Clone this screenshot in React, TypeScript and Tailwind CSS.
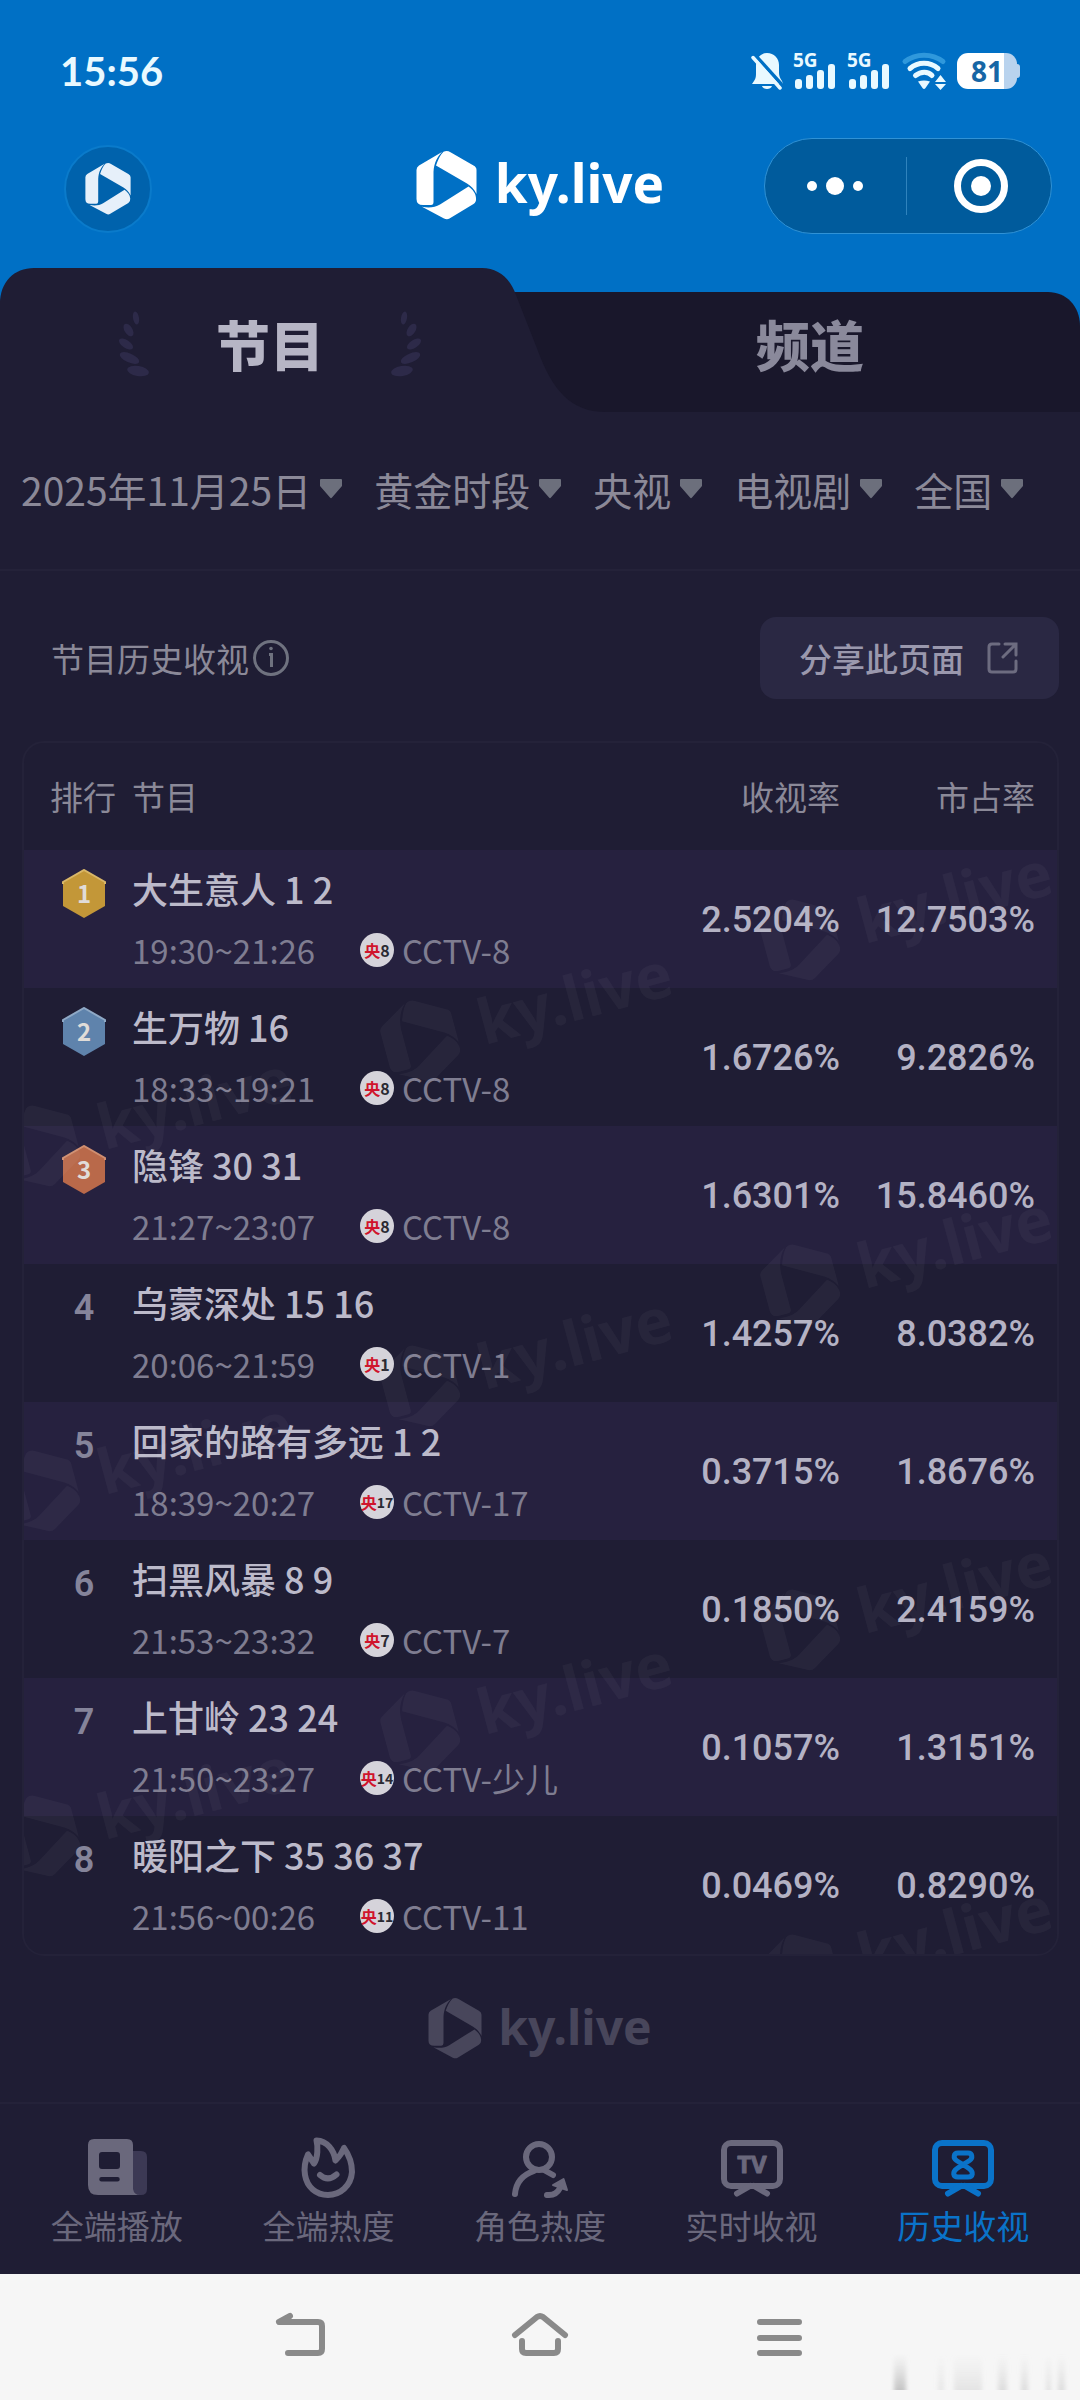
import { useState } from "react";
import type { ReactNode } from "react";
import { clsx } from "clsx";

interface Program {
  rank: number;
  title: string;
  time: string;
  mark: string;
  channel: string;
  rating: string;
  share: string;
}

const PROGRAMS: Program[] = [
  { rank: 1, title: "大生意人 1 2", time: "19:30~21:26", mark: "8", channel: "CCTV-8", rating: "2.5204%", share: "12.7503%" },
  { rank: 2, title: "生万物 16", time: "18:33~19:21", mark: "8", channel: "CCTV-8", rating: "1.6726%", share: "9.2826%" },
  { rank: 3, title: "隐锋 30 31", time: "21:27~23:07", mark: "8", channel: "CCTV-8", rating: "1.6301%", share: "15.8460%" },
  { rank: 4, title: "乌蒙深处 15 16", time: "20:06~21:59", mark: "1", channel: "CCTV-1", rating: "1.4257%", share: "8.0382%" },
  { rank: 5, title: "回家的路有多远 1 2", time: "18:39~20:27", mark: "17", channel: "CCTV-17", rating: "0.3715%", share: "1.8676%" },
  { rank: 6, title: "扫黑风暴 8 9", time: "21:53~23:32", mark: "7", channel: "CCTV-7", rating: "0.1850%", share: "2.4159%" },
  { rank: 7, title: "上甘岭 23 24", time: "21:50~23:27", mark: "14", channel: "CCTV-少儿", rating: "0.1057%", share: "1.3151%" },
  { rank: 8, title: "暖阳之下 35 36 37", time: "21:56~00:26", mark: "11", channel: "CCTV-11", rating: "0.0469%", share: "0.8290%" },
];

const FILTERS = [
  { label: "日期", value: "2025年11月25日" },
  { label: "时段", value: "黄金时段" },
  { label: "频道组", value: "央视" },
  { label: "类型", value: "电视剧" },
  { label: "地区", value: "全国" },
];

const MEDALS: Record<number, { fill: string; edge: string }> = {
  1: { fill: "#c39738", edge: "#d9b768" },
  2: { fill: "#5f83ac", edge: "#8fa9c6" },
  3: { fill: "#b9694a", edge: "#d08e70" },
};

/* Logo centres inside the table card; the tile repeats every 345px. */
const WATERMARKS = [
  [776, 197],
  [396, 298],
  [16, 403],
  [776, 542],
  [396, 643],
  [16, 748],
  [776, 887],
  [396, 988],
  [16, 1093],
  [776, 1232],
];

function LogoShape() {
  return (
    <>
      <path d="M26 1 3 14.5Q.5 16 .5 19V48Q.5 54 7 54H15Q17.5 54 17.5 51V21C18 12 21 6 26 1Z" />
      <path d="M20 14.5C22 9 24 4 27.5 .8Q31-.8 34.5 1.2L57.5 14.5Q60.5 16 60.5 19V43C58 38 55 35 51 32.5Z" />
      <path d="M52.5 35.5C57 39 59.5 42 60 47Q60.5 51 57.5 53L33.5 67.5Q31 69 28 67.5L6 55.8C13 57 19 56.5 24 53.5Z" />
    </>
  );
}

function LogoMark({ className }: { className?: string }) {
  return (
    <svg viewBox="0 0 61 69" className={className} fill="currentColor" aria-hidden="true">
      <LogoShape />
    </svg>
  );
}

function SignalIcon() {
  return (
    <svg width="44" height="54" viewBox="0 -8 44 54" fill="currentColor" aria-label="信号">
      <text x="0" y="15" fontFamily="Noto Sans, sans-serif" fontSize="19" fontWeight="700">
        5G
      </text>
      <rect x="2" y="27" width="7" height="10" rx="3" />
      <rect x="13" y="23" width="7" height="14" rx="3" />
      <rect x="24" y="18" width="7" height="19" rx="3" />
      <rect x="35" y="12" width="7" height="25" rx="3" />
    </svg>
  );
}

function StatusBar() {
  return (
    <div className="flex h-[124px] items-center justify-between px-[60px] pt-[18px] text-[#e9f9ff]">
      <time className="font-['Lato','Noto_Sans',sans-serif] text-[40px] leading-[48px] font-bold">15:56</time>
      <div className="flex items-center gap-[10px]">
        <svg width="32" height="38" viewBox="0 0 32 38" fill="currentColor" aria-label="静音">
          <path d="M7 6C9 3 12 1 16 1c7 0 12 5 12 12v8c0 3 1 5 3 8l1 3H1l2-3c2-3 2-5 2-8v-8c0-3 1-5 2-7Z" />
          <path d="M11 34h10c-1 4-9 4-10 0Z" />
          <path d="M4 3 33 35" stroke="#0070c5" strokeWidth="3.5" />
          <path d="M2 5.5 29 36" stroke="currentColor" strokeWidth="3.5" strokeLinecap="round" />
        </svg>
        <SignalIcon />
        <SignalIcon />
        <svg width="46" height="38" viewBox="0 0 46 38" fill="none" aria-label="无线网络">
          <g stroke="currentColor" strokeWidth="5" strokeLinecap="round">
            <path d="M4 9.5C15 1 31 1 42 9.5" stroke="#2f98dc" />
            <path d="M9 16.5C17 9.5 29 9.5 37 16.5" />
            <path d="M14.5 23.5C20 19 27 19 31 23.5" />
          </g>
          <path d="M17 29.5Q23 27.5 29 29.5L24.5 36Q23 38 21.5 36Z" fill="currentColor" />
          <path d="M39.5 23 45 30H34ZM34 32H45L39.5 38Z" fill="currentColor" />
        </svg>
        <div className="flex items-center font-['Noto_Sans',sans-serif] text-[28px] leading-[36px] font-bold text-[#1766a5]">
          <span className="flex h-[36px] w-[60px] items-center justify-center rounded-[11px] bg-linear-to-r from-white from-79% to-[#b9d3ee] to-79%">
            81
          </span>
          <span className="h-[14px] w-[3px] rounded-r-[3px] bg-[#b9d3ee]" />
        </div>
      </div>
    </div>
  );
}

function TitleBar() {
  return (
    <div className="grid h-[144px] grid-cols-[1fr_auto_1fr] items-start px-[28px]">
      <button
        aria-label="主页"
        className="mt-[21px] ml-[36px] flex size-[88px] items-center justify-center rounded-full border-2 border-[#0a7bcb] bg-[#0062ac] text-[#e6f0fa]"
      >
        <LogoMark className="h-[52px] w-[46px]" />
      </button>
      <h1 className="mt-[27px] flex items-center gap-[18px] text-white">
        <LogoMark className="h-[69px] w-[61px]" />
        <span className="pb-[6px] font-['Noto_Sans',sans-serif] text-[53px] leading-[60px] font-bold">ky.live</span>
      </h1>
      <div className="mt-[14px] flex h-[96px] w-[288px] items-center justify-self-end rounded-full border border-[#2f92d6] bg-[#005b9c]">
        <button aria-label="更多" className="flex h-full flex-1 items-center justify-center gap-[9px]">
          <span className="size-[10px] rounded-full bg-white" />
          <span className="size-[18px] rounded-full bg-white" />
          <span className="size-[10px] rounded-full bg-white" />
        </button>
        <span className="h-[58px] w-px bg-[#2f83bd]" />
        <button aria-label="关闭" className="flex h-full flex-1 items-center justify-center pl-[4px]">
          <span className="flex size-[54px] items-center justify-center rounded-full border-[7px] border-white">
            <span className="size-[20px] rounded-full bg-white" />
          </span>
        </button>
      </div>
    </div>
  );
}

function Laurel({ flip }: { flip?: boolean }) {
  return (
    <svg
      width="32"
      height="68"
      viewBox="0 0 32 68"
      fill="#2d2a49"
      className={clsx(flip && "-scale-x-100")}
      aria-hidden="true"
    >
      <ellipse cx="18" cy="8" rx="3" ry="6.5" transform="rotate(-10 18 8)" />
      <ellipse cx="10.5" cy="20" rx="4" ry="7" transform="rotate(-32 10.5 20)" />
      <ellipse cx="8" cy="34" rx="4" ry="8" transform="rotate(-56 8 34)" />
      <ellipse cx="11.5" cy="48" rx="4.5" ry="10.5" transform="rotate(-66 11.5 48)" />
      <ellipse cx="20" cy="61" rx="5" ry="11" transform="rotate(-80 20 61)" />
    </svg>
  );
}

function Tabs() {
  const [tab, setTab] = useState<"program" | "channel">("program");
  return (
    <div className="relative">
      <svg
        viewBox="0 0 1080 144"
        preserveAspectRatio="none"
        className={clsx("absolute inset-0 h-full w-full", tab === "channel" && "-scale-x-100")}
        aria-hidden="true"
      >
        <path d="M470 24H1048C1066 24 1080 38 1080 58V144H470Z" fill="#19172b" />
        <path
          d="M0 144V36C0 14 14 0 34 0H482C498 0 510 10 516 27L538 83C552 121 570 144 606 144Z"
          fill="#1f1d34"
        />
      </svg>
      <div className="relative grid grid-cols-2 pt-[42px] pb-[34px] text-[54px] leading-[68px] font-black" role="tablist">
        <button
          role="tab"
          aria-selected={tab === "program"}
          onClick={() => setTab("program")}
          className={clsx(
            "flex items-center justify-center gap-[66px]",
            tab === "program" ? "text-[#b6b5c5]" : "text-[#8a899b]",
          )}
        >
          <Laurel />
          节目
          <Laurel flip />
        </button>
        <button
          role="tab"
          aria-selected={tab === "channel"}
          onClick={() => setTab("channel")}
          className={tab === "channel" ? "text-[#b6b5c5]" : "text-[#8a899b]"}
        >
          频道
        </button>
      </div>
    </div>
  );
}

function FilterBar() {
  return (
    <div className="flex items-center gap-[32px] border-b-2 border-[#242239] pt-[49px] pb-[52px] pl-[21px] text-[39px] leading-[56px] text-[#8b8998]">
      {FILTERS.map((f) => (
        <label key={f.label} className="flex items-center gap-[9px]">
          <select aria-label={f.label} className="field-sizing-content appearance-none bg-transparent outline-none">
            <option>{f.value}</option>
          </select>
          <svg width="22" height="20" viewBox="0 0 22 20" fill="#6c6f7c" aria-hidden="true">
            <path d="M1 0H21Q22 0 22 1V7L12 18.5Q11 20 10 18.5L0 7V1Q0 0 1 0Z" />
          </svg>
        </label>
      ))}
    </div>
  );
}

function SectionHeader() {
  return (
    <div className="flex items-center justify-between pt-[46px] pr-[21px] pb-[42px] pl-[51px] text-[33px] leading-[44px]">
      <h2 className="flex items-center gap-[3px] text-[#8b8998]">
        节目历史收视
        <button aria-label="说明">
          <svg width="38" height="38" viewBox="0 0 38 38" fill="none" stroke="#6f727f" strokeWidth="3">
            <circle cx="19" cy="19" r="16.5" />
            <path d="M17 15.5H19.5V28" />
            <circle cx="19" cy="9.5" r="1.8" fill="#6f727f" stroke="none" />
          </svg>
        </button>
      </h2>
      <button className="flex h-[82px] items-center gap-[22px] rounded-[16px] bg-[#2a2843] px-[39px] font-medium text-[#9a98ad]">
        分享此页面
        <svg
          width="34"
          height="34"
          viewBox="0 0 34 34"
          fill="none"
          stroke="#6d6c80"
          strokeWidth="3"
          strokeLinecap="round"
          aria-hidden="true"
        >
          <path d="M13 3H6Q3 3 3 6V28Q3 31 6 31H27Q30 31 30 28V20" />
          <path d="M19 3H30V14M30 3 17 16" />
        </svg>
      </button>
    </div>
  );
}

function RankBadge({ rank }: { rank: number }) {
  const medal = MEDALS[rank];
  if (!medal) {
    return (
      <span className="block w-[44px] text-center font-['Roboto',sans-serif] text-[36px] leading-[50px] font-semibold text-[#85849a]">
        {rank}
      </span>
    );
  }
  return (
    <svg width="44" height="50" viewBox="0 0 44 50" role="img" aria-label={`第${rank}名`}>
      <path d="M22 1 43 13V37L22 49 1 37V13Z" fill={medal.fill} />
      <path d="M1 15V13L22 1 43 13V15" fill="none" stroke={medal.edge} strokeWidth="2" />
      <text
        x="22"
        y="34"
        textAnchor="middle"
        fontFamily="Noto Sans CJK SC, sans-serif"
        fontSize="24"
        fontWeight="700"
        fill="#e0dcd8"
      >
        {rank}
      </text>
    </svg>
  );
}

function ChannelMark({ num }: { num: string }) {
  return (
    <span className="flex size-[34px] items-center justify-center rounded-full bg-[#d5d3da] text-[16px] leading-[34px] font-bold text-[#2b2a33]">
      <span className="text-[#d0142c]">央</span>
      <span className={num.length > 1 ? "text-[14px]" : "text-[16px]"}>{num}</span>
    </span>
  );
}

function Watermark() {
  return (
    <svg className="pointer-events-none absolute inset-0 h-full w-full" fill="#ffffff" fillOpacity="0.04" aria-hidden="true">
      {WATERMARKS.map(([x, y]) => (
        <g key={`${x}-${y}`} transform={`translate(${x} ${y}) rotate(-15) scale(1.22)`}>
          <g transform="translate(-30 -34)">
            <LogoShape />
            <text x="80" y="51" fontFamily="Noto Sans, sans-serif" fontSize="51" fontWeight="700">
              ky.live
            </text>
          </g>
        </g>
      ))}
    </svg>
  );
}

function RatingTable() {
  return (
    <div className="relative mr-[21px] ml-[22px] overflow-hidden rounded-[22px] border-2 border-[#242239]">
      <table className="w-full table-fixed text-left">
        <colgroup>
          <col className="w-[108px]" />
          <col />
          <col className="w-[181px]" />
          <col className="w-[217px]" />
        </colgroup>
        <thead className="text-[33px] leading-[44px] text-[#8b8998]">
          <tr className="h-[107px]">
            <th className="pb-[2px] pl-[26px] font-normal whitespace-nowrap">排行</th>
            <th className="pb-[2px] font-normal">节目</th>
            <th className="pb-[2px] text-right font-normal">收视率</th>
            <th className="pr-[22px] pb-[2px] text-right font-normal">市占率</th>
          </tr>
        </thead>
        <tbody>
          {PROGRAMS.map((p) => (
            <tr key={p.rank} className="h-[138px] odd:bg-[#26213f]">
              <td className="pt-[19px] pl-[38px] align-top">
                <RankBadge rank={p.rank} />
              </td>
              <td className="align-top">
                <p className="pt-[16px] text-[36px] leading-[44px] font-medium whitespace-nowrap text-[#bcbaca]">
                  {p.title}
                </p>
                <div className="flex items-center pt-[18px] text-[33px] leading-[44px] whitespace-nowrap text-[#7f7d91]">
                  <span className="w-[228px]">{p.time}</span>
                  <ChannelMark num={p.mark} />
                  <span className="pl-[8px]">{p.channel}</span>
                </div>
              </td>
              <td className="pt-[2px] text-right font-['Roboto',sans-serif] text-[36px] font-medium text-[#b4b2c4]">
                {p.rating}
              </td>
              <td className="pt-[2px] pr-[22px] text-right font-['Roboto',sans-serif] text-[36px] font-medium text-[#b4b2c4]">
                {p.share}
              </td>
            </tr>
          ))}
        </tbody>
      </table>
      <Watermark />
    </div>
  );
}

function TvFrame({ children }: { children: ReactNode }) {
  return (
    <g stroke="currentColor" strokeWidth="6" strokeLinecap="round" strokeLinejoin="round" fill="none">
      <rect x="4" y="8" width="56" height="43" rx="7" />
      <path d="M17 58.5 30 51M47 58.5 34 51" />
      {children}
    </g>
  );
}

const NAV_ITEMS: { label: string; icon: ReactNode; active?: boolean }[] = [
  {
    label: "全端播放",
    icon: (
      <>
        <path d="M48 16H56Q62 16 62 22V54Q62 60 56 60H48Z" fill="#3c3954" />
        <path
          fillRule="evenodd"
          fill="currentColor"
          d="M9 4H42Q48 4 48 10V54Q49 60 55 60H13Q3 60 3 50V10Q3 4 9 4ZM17 17Q14 17 14 20V31Q14 34 17 34H32Q35 34 35 31V20Q35 17 32 17ZM16.5 42A2 2 0 0 0 16.5 46.5H32.5A2 2 0 0 0 32.5 42Z"
        />
      </>
    ),
  },
  {
    label: "全端热度",
    icon: (
      <g stroke="currentColor" strokeWidth="6" strokeLinecap="round" strokeLinejoin="round" fill="none">
        <path d="M12 19.5C9 26 8 34 9 40 11 52 20 60 32 60S55 51 56 37C56 28 53 20 48 13 46 18 43 22 39.5 25.5 38 15 31 6 20.5 5.5 22 11 22 23 18 28.5Z" />
        <path d="M24 40Q32 47 40.5 39.5" />
      </g>
    ),
  },
  {
    label: "角色热度",
    icon: (
      <g stroke="currentColor" strokeWidth="6" strokeLinecap="round" strokeLinejoin="round" fill="none">
        <circle cx="31" cy="22" r="13" />
        <path d="M7 59C8 47 14 40 26 36M36 35 45 40M39 60Q48 61 52 53" />
        <path d="M45 50 55.5 44 59 55Z" fill="currentColor" strokeWidth="2" />
      </g>
    ),
  },
  {
    label: "实时收视",
    icon: (
      <TvFrame>
        <text
          x="32"
          y="38"
          textAnchor="middle"
          fontFamily="Noto Sans, sans-serif"
          fontSize="24"
          fontWeight="700"
          fill="currentColor"
          strokeWidth="1"
        >
          TV
        </text>
      </TvFrame>
    ),
  },
  {
    label: "历史收视",
    active: true,
    icon: (
      <TvFrame>
        <path
          strokeWidth="5"
          d="M27 18H37C41.5 18 42 23 38.5 25.5 34 28.5 30 30.5 26 33.5 21 37 22 42 27 42H37C42 42 43 37 38 33.5 34 30.5 30 28.5 25.5 25.5 22 23 22.5 18 27 18Z"
        />
      </TvFrame>
    ),
  },
];

function BottomNav() {
  return (
    <nav className="grid grid-cols-5 border-t-2 border-[#242239] px-[11px] pt-[31px] pb-[27px]">
      {NAV_ITEMS.map((item) => (
        <a
          key={item.label}
          href="#"
          aria-current={item.active ? "page" : undefined}
          className={clsx(
            "flex flex-col items-center gap-[4px] text-[33px] leading-[44px]",
            item.active ? "text-[#0a73c9]" : "text-[#6a687c]",
          )}
        >
          <svg width="64" height="64" viewBox="0 0 64 64" aria-hidden="true">
            {item.icon}
          </svg>
          {item.label}
        </a>
      ))}
    </nav>
  );
}

function SystemBar() {
  return (
    <div className="relative flex h-[126px] items-center justify-center gap-[180px] bg-[#f6f6f6] text-[#8a8a8a]">
      <button aria-label="返回">
        <svg width="60" height="52" viewBox="0 0 60 52" fill="none" stroke="currentColor" strokeWidth="6" strokeLinecap="round" strokeLinejoin="round">
          <path d="M20 5 9 11H48Q52 11 52 15V38Q52 42 48 42H18" />
        </svg>
      </button>
      <button aria-label="主屏幕">
        <svg width="60" height="52" viewBox="0 0 60 52" fill="none" stroke="currentColor" strokeWidth="6" strokeLinecap="round" strokeLinejoin="round">
          <path d="M5 24 27 6Q30 4 33 6L55 24" />
          <path d="M12 30V38Q12 42 16 42H44Q48 42 48 38V30" />
        </svg>
      </button>
      <button aria-label="最近任务">
        <svg width="60" height="52" viewBox="0 0 60 52" fill="none" stroke="currentColor" strokeWidth="6" strokeLinecap="round">
          <path d="M10 11H49M10 27H49M10 42H49" />
        </svg>
      </button>
      <svg width="180" height="36" viewBox="0 0 180 36" className="absolute right-[10px] bottom-[10px]" aria-hidden="true">
        <defs>
          <linearGradient id="smudge" x1="0" y1="0" x2="0" y2="1">
            <stop offset="0" stopColor="#d0d0d0" stopOpacity="0" />
            <stop offset="1" stopColor="#c4c4c4" />
          </linearGradient>
          <filter id="soften">
            <feGaussianBlur stdDeviation="2 0" />
          </filter>
        </defs>
        <g fill="url(#smudge)" filter="url(#soften)">
          <rect x="4" width="12" height="36" />
          <rect x="48" width="6" height="36" opacity="0.3" />
          <rect x="64" width="28" height="36" opacity="0.35" />
          <rect x="108" width="9" height="36" opacity="0.5" />
          <rect x="131" width="7" height="36" opacity="0.5" />
          <rect x="156" width="5" height="36" opacity="0.4" />
          <rect x="168" width="7" height="36" opacity="0.5" />
        </g>
      </svg>
    </div>
  );
}

export default function App() {
  return (
    <div className="flex min-h-screen flex-col bg-[#1f1d34] font-['Noto_Sans_CJK_SC',sans-serif]">
      <header className="bg-[#0070c5]">
        <StatusBar />
        <TitleBar />
        <Tabs />
      </header>
      <main className="flex-1">
        <FilterBar />
        <SectionHeader />
        <RatingTable />
        <div className="flex items-center justify-center gap-[16px] pt-[42px] pb-[41px] text-[#48465b]">
          <LogoMark className="h-[61px] w-[54px]" />
          <span className="pb-[4px] font-['Noto_Sans',sans-serif] text-[48px] leading-[56px] font-bold">ky.live</span>
        </div>
      </main>
      <BottomNav />
      <SystemBar />
    </div>
  );
}
